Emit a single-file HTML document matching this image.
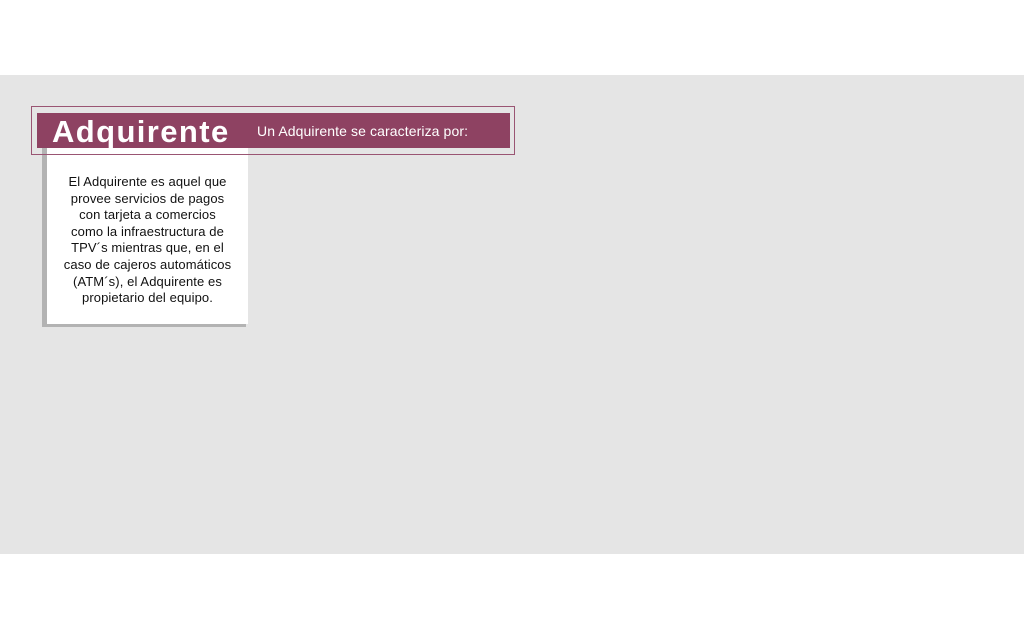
<!DOCTYPE html>
<html><head><meta charset="utf-8"><style>
body{margin:0;width:1024px;height:620px;background:#fff;position:relative;overflow:hidden;font-family:"Liberation Sans",sans-serif}
.bg{position:absolute;left:0;top:75px;width:1024px;height:479px;background:#e5e5e5}
.frame{position:absolute;left:31px;top:106px;width:482px;height:47px;border:1.5px solid #9a5573}
.bar{position:absolute;left:37px;top:113px;width:473px;height:35px;background:#8e4262}
.title{position:absolute;left:52px;top:114px;font-size:31px;font-weight:bold;color:#fff;line-height:36px;letter-spacing:1.4px}
.sub{position:absolute;left:257px;top:113px;font-size:14px;color:#fff;line-height:36px;letter-spacing:0.1px}
.shadow{position:absolute;left:42px;top:148px;width:204px;height:179px;background:#b3b3b3}
.card{position:absolute;left:47px;top:148px;width:201px;height:176px;background:#fff}
.txt{position:absolute;left:47px;top:174px;width:201px;text-align:center;font-size:13px;line-height:16.6px;color:#111;letter-spacing:0.1px}
</style></head><body>
<div class="bg"></div>
<div class="shadow"></div>
<div class="card"></div>
<div class="frame"></div>
<div class="bar"></div>
<div class="title">Adquirente</div>
<div class="sub">Un Adquirente se caracteriza por:</div>
<div class="txt">El Adquirente es aquel que<br>provee servicios de pagos<br>con tarjeta a comercios<br>como la infraestructura de<br>TPV´s mientras que, en el<br>caso de cajeros automáticos<br>(ATM´s), el Adquirente es<br>propietario del equipo.</div>
</body></html>
